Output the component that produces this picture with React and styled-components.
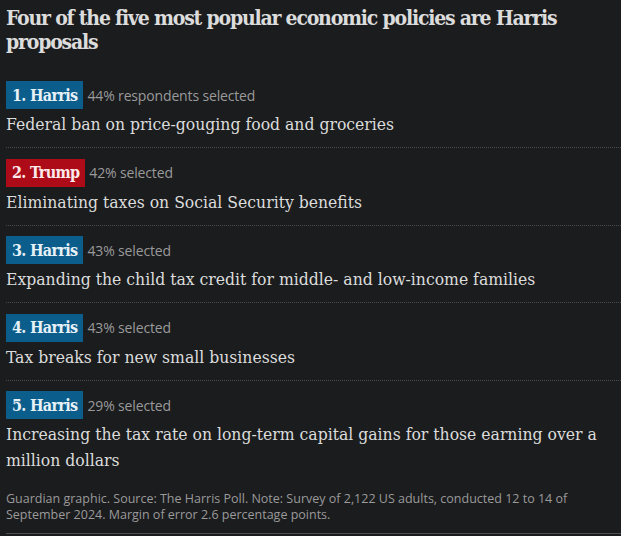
import React from "react";
import styled, { createGlobalStyle } from "styled-components";

const Global = createGlobalStyle`
  html, body { margin: 0; padding: 0; background: #1b1c1e; }
`;

const serif = `"DejaVu Serif Condensed", "DejaVu Serif", serif`;

const Page = styled.div`
  background: #1b1c1e;
  padding: 6px 0 0 6px;
  min-height: 536px;
  box-sizing: border-box;
`;

const Title = styled.h2`
  margin: 0 0 27px;
  font-family: ${serif};
  font-stretch: condensed;
  font-weight: bold;
  font-size: 21px;
  line-height: 24px;
  letter-spacing: -1.2px;
  color: #dcdcdc;
  padding-right: 20px;
`;

const List = styled.div`
  display: flex;
  flex-direction: column;
`;

const Row = styled.div`
  padding: 0 0 10px;
  border-bottom: ${(p) => (p.$last ? "none" : "1px dotted #4a4a4a")};
  & + & { padding-top: 10.5px; }
`;

const Head = styled.div`
  display: flex;
  align-items: center;
  gap: 4px;
  height: 28px;
`;

const Badge = styled.span`
  display: inline-flex;
  align-items: center;
  height: 28px;
  padding: 0 6px;
  background: ${(p) => (p.$party === "trump" ? "#ad0b18" : "#0b5e8c")};
  color: ${(p) => (p.$party === "trump" ? "#fde9ea" : "#e6f1f8")};
  font-family: ${serif};
  font-stretch: condensed;
  font-weight: bold;
  font-size: 16px;
  letter-spacing: -0.7px;
`;

const Share = styled.span`
  font-family: "Open Sans", sans-serif;
  font-size: 14px;
  letter-spacing: -0.15px;
  color: #9a9a9a;
`;

const Policy = styled.div`
  margin-top: 2px;
  font-family: ${serif};
  font-stretch: condensed;
  font-size: 17.4px;
  line-height: 26px;
  color: #dcdcdc;
  padding-right: 14px;
`;

const Footer = styled.div`
  margin-top: 8px;
  padding-bottom: 10px;
  border-bottom: 1px solid #4f4f4f;
  font-family: "Open Sans", sans-serif;
  font-size: 12.5px;
  line-height: 16px;
  color: #9a9a9a;
  padding-right: 20px;
`;

const items = [
  { n: 1, who: "Harris", party: "harris", share: "44% respondents selected", text: "Federal ban on price-gouging food and groceries" },
  { n: 2, who: "Trump", party: "trump", share: "42% selected", text: "Eliminating taxes on Social Security benefits" },
  { n: 3, who: "Harris", party: "harris", share: "43% selected", text: "Expanding the child tax credit for middle- and low-income families" },
  { n: 4, who: "Harris", party: "harris", share: "43% selected", text: "Tax breaks for new small businesses" },
  { n: 5, who: "Harris", party: "harris", share: "29% selected", text: "Increasing the tax rate on long-term capital gains for those earning over a million dollars" },
];

export default function App() {
  return (
    <Page>
      <Global />
      <Title>Four of the five most popular economic policies are Harris proposals</Title>
      <List>
        {items.map((it, i) => (
          <Row key={it.n} $last={i === items.length - 1}>
            <Head>
              <Badge $party={it.party}>{it.n}. {it.who}</Badge>
              <Share>{it.share}</Share>
            </Head>
            <Policy>{it.text}</Policy>
          </Row>
        ))}
      </List>
      <Footer>
        Guardian graphic. Source: The Harris Poll. Note: Survey of 2,122 US adults, conducted 12 to 14 of September 2024. Margin of error 2.6 percentage points.
      </Footer>
    </Page>
  );
}
